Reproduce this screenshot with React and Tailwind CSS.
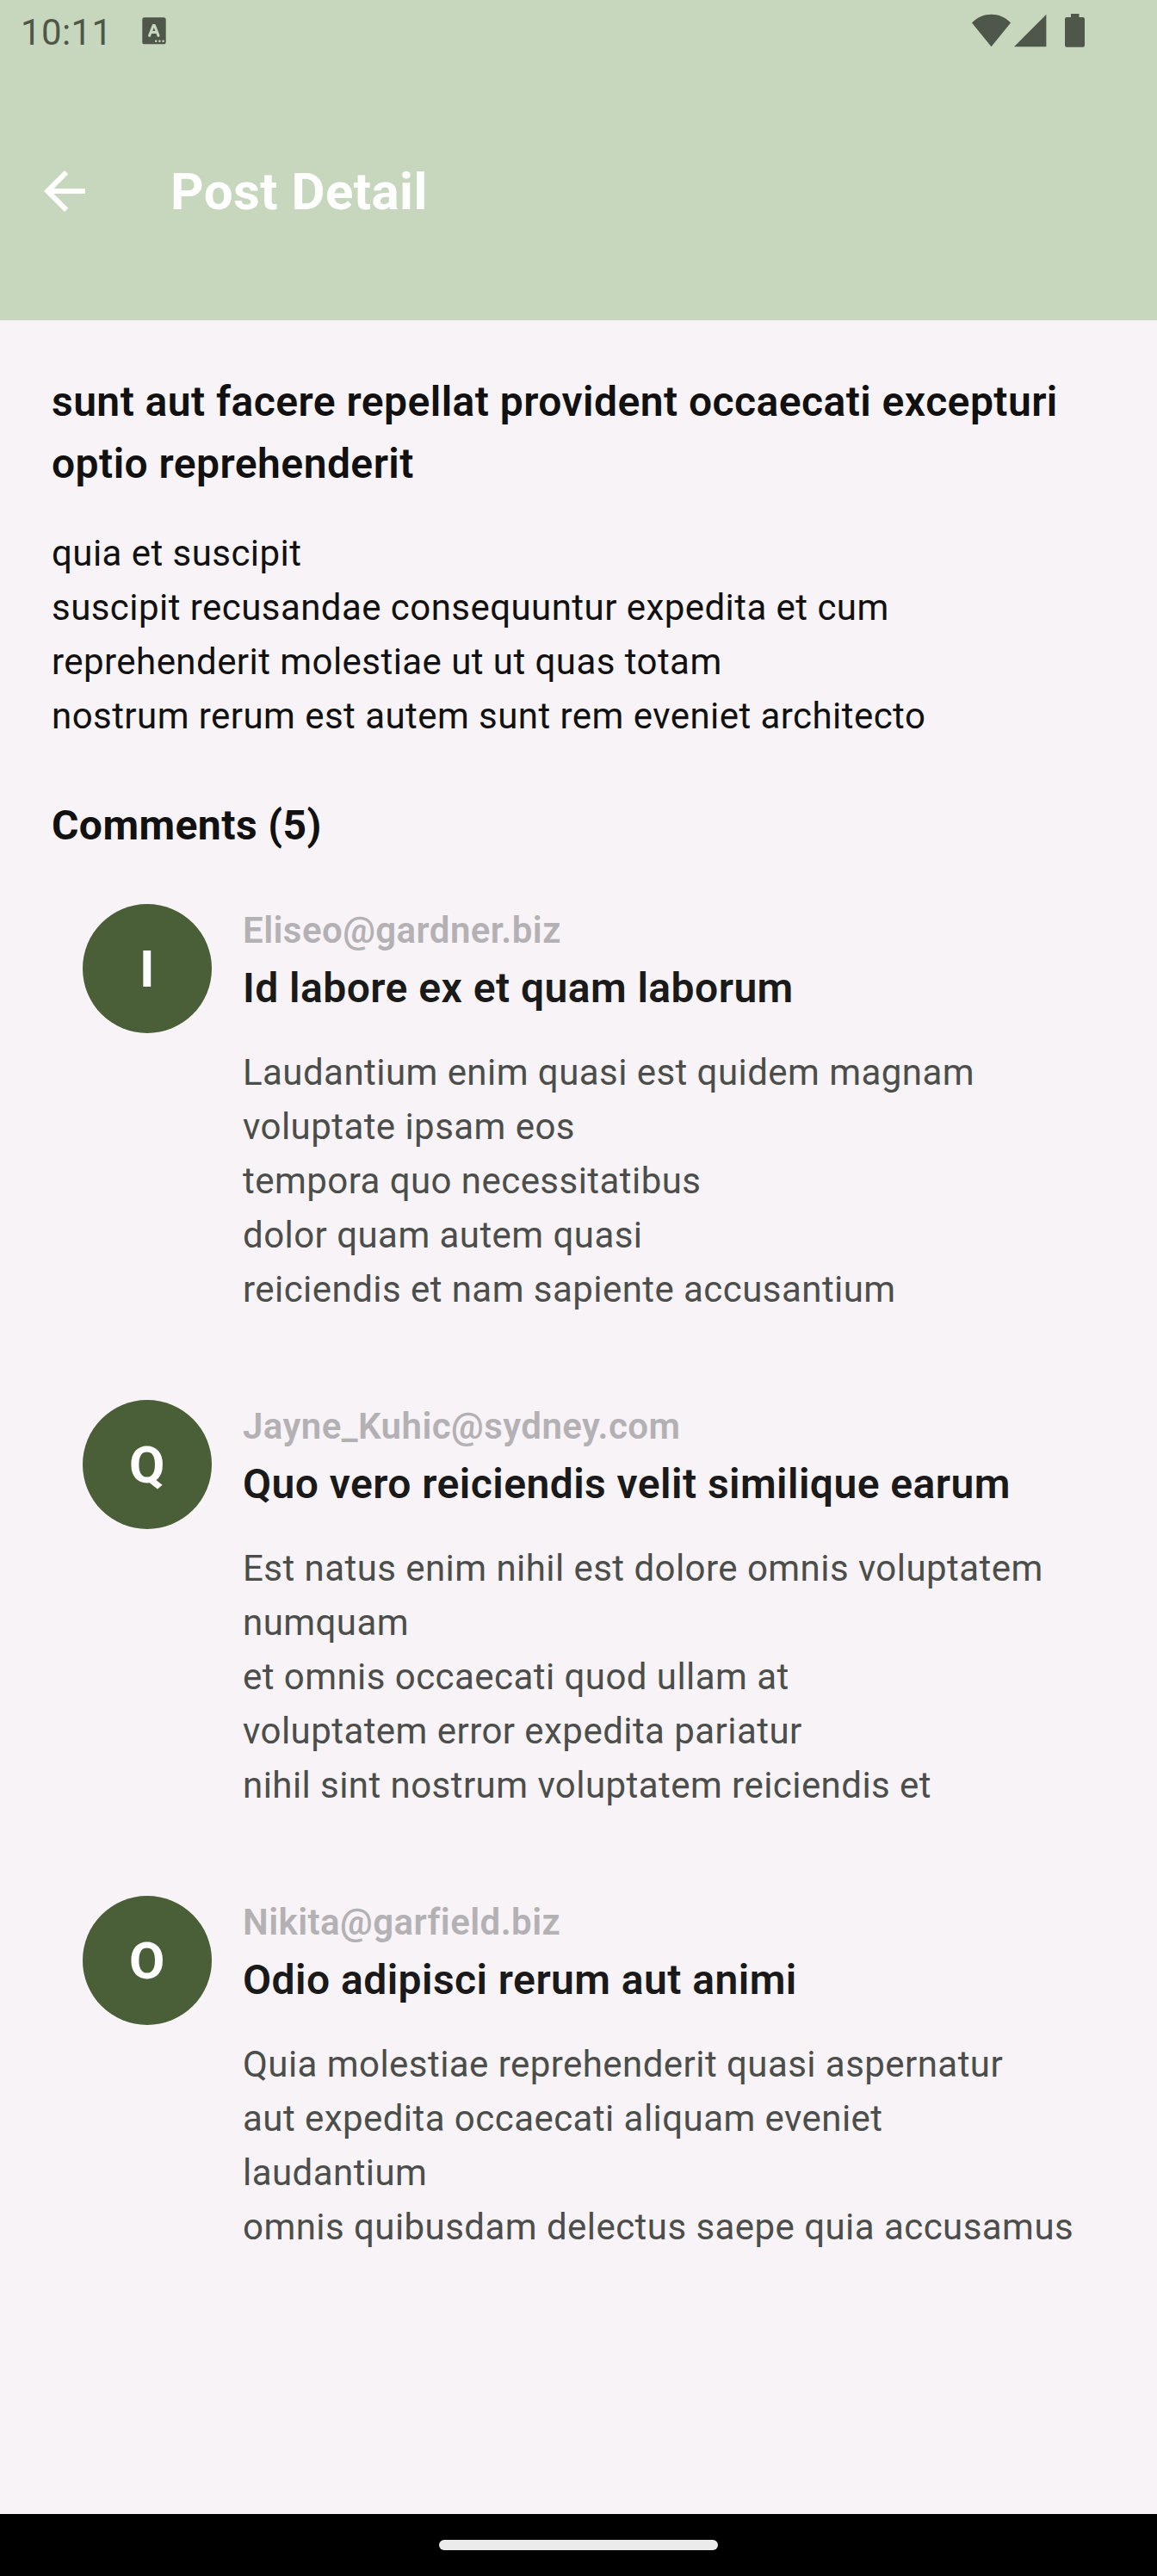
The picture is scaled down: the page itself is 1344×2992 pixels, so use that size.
const comments = [
  {
    email: "Eliseo@gardner.biz",
    name: "Id labore ex et quam laborum",
    lines: ["Laudantium enim quasi est quidem magnam", "voluptate ipsam eos", "tempora quo necessitatibus", "dolor quam autem quasi", "reiciendis et nam sapiente accusantium"],
  },
  {
    email: "Jayne_Kuhic@sydney.com",
    name: "Quo vero reiciendis velit similique earum",
    lines: ["Est natus enim nihil est dolore omnis voluptatem", "numquam", "et omnis occaecati quod ullam at", "voluptatem error expedita pariatur", "nihil sint nostrum voluptatem reiciendis et"],
  },
  {
    email: "Nikita@garfield.biz",
    name: "Odio adipisci rerum aut animi",
    lines: ["Quia molestiae reprehenderit quasi aspernatur", "aut expedita occaecati aliquam eveniet", "laudantium", "omnis quibusdam delectus saepe quia accusamus"],
  },
];

const postLines = [
  "quia et suscipit",
  "suscipit recusandae consequuntur expedita et cum",
  "reprehenderit molestiae ut ut quas totam",
  "nostrum rerum est autem sunt rem eveniet architecto",
];

function Lines({ lines }) {
  return lines.map((line) => (
    <span key={line} className="block whitespace-nowrap">
      {line}
    </span>
  ));
}

function StatusBar() {
  return (
    <div className="flex h-[72px] items-start pl-6 text-[#4f574b]">
      <span className="mt-[13px] w-[141px] text-[42px] leading-[49px] tracking-[0.4px]">10:11</span>
      <svg className="mt-5" width="28" height="32" viewBox="0 0 28 32">
        <rect x="0.3" y="0.3" width="27.4" height="31" rx="2.6" fill="currentColor" />
        <path d="M8.6 21.4 13.2 9.4h1.2l4.6 12M10.3 17.6h7.2" fill="none" stroke="#c7d7bd" strokeWidth="3" strokeLinecap="round" strokeLinejoin="round" />
        <circle cx="16.2" cy="27.7" r="1.3" fill="#c7d7bd" />
        <circle cx="20.4" cy="27.7" r="1.3" fill="#c7d7bd" />
        <circle cx="24.6" cy="27.7" r="1.3" fill="#c7d7bd" />
      </svg>
      <div className="ml-auto mr-[84px] mt-4 flex">
        <svg width="45" height="39" viewBox="0 0 45 39">
          <path d="M0 10.6C6.2 4 14 .8 22.5 .8S38.8 4 45 10.6L22.5 38.2Z" fill="currentColor" />
        </svg>
        <svg className="ml-1" width="38" height="39" viewBox="0 0 38 39">
          <path d="M37.4 .8V38.2H0Z" fill="currentColor" />
        </svg>
        <svg className="ml-[21px]" width="23" height="39" viewBox="0 0 23 39">
          <path d="M7 0h9.5v4h4.3Q23 4 23 6.2v30.3Q23 38.7 20.8 38.7H2.2Q0 38.7 0 36.5V6.2Q0 4 2.2 4H7Z" fill="currentColor" />
        </svg>
      </div>
    </div>
  );
}

function Comment({ comment }) {
  return (
    <article className="flex gap-9">
      <div className="mt-px flex size-[150px] shrink-0 items-center justify-center rounded-full bg-[#4a5f38] pt-0.5 text-[60px] font-bold leading-none text-white">
        {comment.name[0]}
      </div>
      <div>
        <p className="text-[42px] font-semibold leading-[63px] text-[#b3b1b4]">{comment.email}</p>
        <h3 className="whitespace-nowrap text-[48px] font-semibold leading-[72px] text-[#1a1a1a]">{comment.name}</h3>
        <p className="mt-[30px] text-[42px] leading-[63px] text-[#4b4e4a]">
          <Lines lines={comment.lines} />
        </p>
      </div>
    </article>
  );
}

export default function App() {
  return (
    <div className="flex h-[2992px] w-[1344px] flex-col overflow-hidden bg-[#f8f3f7] font-[Roboto,sans-serif] tracking-[0.45px]">
      <header className="h-[372px] shrink-0 bg-[#c7d7bd]">
        <StatusBar />
        <div className="flex h-[300px] items-center pl-[39px]">
          <svg width="72" height="72" viewBox="0 0 24 24" className="text-white">
            <path d="M20 11H7.83l5.59-5.59L12 4l-8 8 8 8 1.41-1.41L7.83 13H20v-2z" fill="currentColor" />
          </svg>
          <h1 className="ml-[87px] pt-0.5 text-[60px] font-bold leading-[72px] text-white">Post Detail</h1>
        </div>
      </header>
      <main className="flex-1 px-[60px] pt-[59px]">
        <h2 className="text-[48px] font-semibold leading-[72px] text-[#111111]">
          <Lines lines={["sunt aut facere repellat provident occaecati excepturi", "optio reprehenderit"]} />
        </h2>
        <p className="mt-9 text-[42px] leading-[63px] text-[#111111]">
          <Lines lines={postLines} />
        </p>
        <h2 className="mt-[60px] text-[48px] font-bold leading-[72px] text-[#111111]">Comments (5)</h2>
        <div className="mt-[54px] flex flex-col gap-24 pl-9">
          {comments.map((comment) => (
            <Comment key={comment.email} comment={comment} />
          ))}
        </div>
      </main>
      <footer className="flex h-[72px] shrink-0 justify-center bg-black pt-[30px]">
        <div className="h-3 w-[324px] rounded-full bg-[#ebebeb]" />
      </footer>
    </div>
  );
}
